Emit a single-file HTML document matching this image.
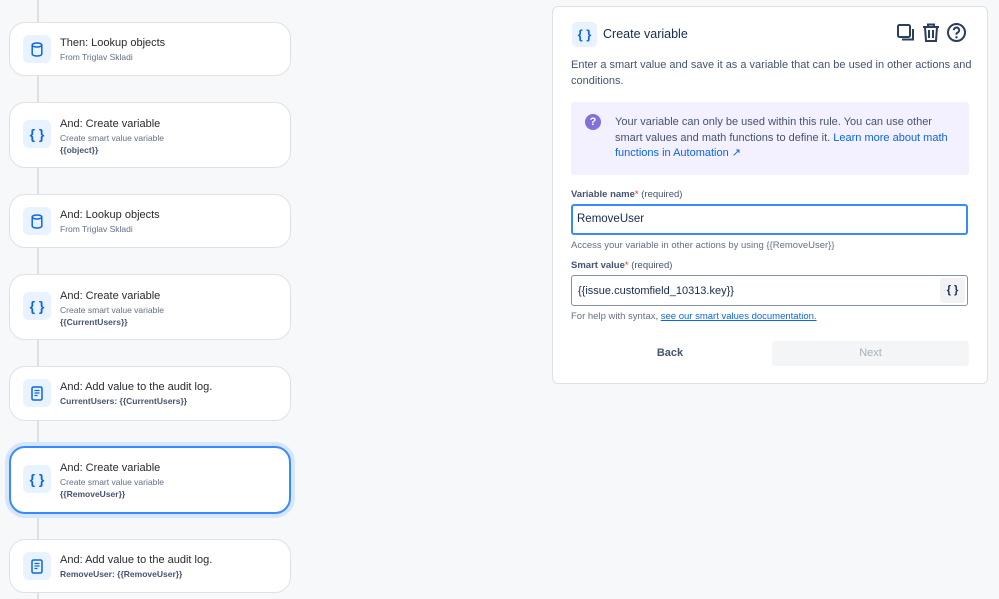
<!DOCTYPE html>
<html><head><meta charset="utf-8"><style>
*{box-sizing:border-box;margin:0;padding:0}
body{width:999px;height:599px;background:#f7f8f9;font-family:"Liberation Sans",sans-serif;color:#172b4d;position:relative;overflow:hidden}
.line{position:absolute;left:37px;top:0;width:2px;height:599px;background:#dcdfe4}
.card{position:absolute;left:9px;width:282px;background:#fff;border:1px solid #dfe1e6;border-radius:16px}
.card.sel{border:2px solid #388bff;box-shadow:0 0 0 4px #d6e6ff}
.ic{position:absolute;left:13px;width:28px;height:28px;border-radius:6px;background:#e9f2ff;color:#0c66e4;display:flex;align-items:center;justify-content:center;font-weight:bold;font-size:14px}
.t{position:absolute;left:50px;font-size:11px;color:#292a2e}
.s{position:absolute;left:50px;font-size:8.5px;color:#626f86}
.b{position:absolute;left:50px;font-size:8.5px;color:#44546f;font-weight:bold}
.panel{position:absolute;left:552px;top:6px;width:436px;height:378px;background:#fff;border:1px solid #dfe1e6;border-radius:6px}
</style></head><body>
<div class="line"></div>

<div class="card" style="top:22px;height:54px"><div class="ic" style="top:12px"><svg width="12" height="15" viewBox="0 0 12 15"><ellipse cx="6" cy="3" rx="4.8" ry="2" fill="none" stroke="#0c66e4" stroke-width="1.5"/><path d="M1.2 3v9c0 1.1 2.1 2 4.8 2s4.8-.9 4.8-2V3" fill="none" stroke="#0c66e4" stroke-width="1.5"/></svg></div><div class="t" style="top:14px">Then: Lookup objects</div><div class="s" style="top:29px">From Triglav Skladi</div></div>

<div class="card" style="top:102px;height:66px"><div class="ic" style="top:17px">{ }</div><div class="t" style="top:15px">And: Create variable</div><div class="s" style="top:30px">Create smart value variable</div><div class="b" style="top:42px">{{object}}</div></div>

<div class="card" style="top:194px;height:54px"><div class="ic" style="top:12px"><svg width="12" height="15" viewBox="0 0 12 15"><ellipse cx="6" cy="3" rx="4.8" ry="2" fill="none" stroke="#0c66e4" stroke-width="1.5"/><path d="M1.2 3v9c0 1.1 2.1 2 4.8 2s4.8-.9 4.8-2V3" fill="none" stroke="#0c66e4" stroke-width="1.5"/></svg></div><div class="t" style="top:14px">And: Lookup objects</div><div class="s" style="top:29px">From Triglav Skladi</div></div>

<div class="card" style="top:274px;height:66px"><div class="ic" style="top:17px">{ }</div><div class="t" style="top:15px">And: Create variable</div><div class="s" style="top:30px">Create smart value variable</div><div class="b" style="top:42px">{{CurrentUsers}}</div></div>

<div class="card" style="top:366px;height:55px"><div class="ic" style="top:12px"><svg width="12" height="15" viewBox="0 0 12 15"><rect x="1" y="1" width="10" height="13" rx="1.5" fill="none" stroke="#0c66e4" stroke-width="1.5"/><path d="M3.5 4.5h5M3.5 7h5M3.5 9.5h3" stroke="#0c66e4" stroke-width="1.3"/></svg></div><div class="t" style="top:14px">And: Add value to the audit log.</div><div class="b" style="top:29px">CurrentUsers: {{CurrentUsers}}</div></div>

<div class="card sel" style="top:446px;height:68px"><div class="ic" style="top:17px;left:12px">{ }</div><div class="t" style="top:14px;left:49px">And: Create variable</div><div class="s" style="top:29px;left:49px">Create smart value variable</div><div class="b" style="top:41px;left:49px">{{RemoveUser}}</div></div>

<div class="card" style="top:539px;height:54px"><div class="ic" style="top:12px"><svg width="12" height="15" viewBox="0 0 12 15"><rect x="1" y="1" width="10" height="13" rx="1.5" fill="none" stroke="#0c66e4" stroke-width="1.5"/><path d="M3.5 4.5h5M3.5 7h5M3.5 9.5h3" stroke="#0c66e4" stroke-width="1.3"/></svg></div><div class="t" style="top:14px">And: Add value to the audit log.</div><div class="b" style="top:29px">RemoveUser: {{RemoveUser}}</div></div>

<div class="panel">
 <div style="position:absolute;left:19px;top:15px;width:25px;height:25px;border-radius:5px;background:#e9f2ff;color:#0c66e4;font-weight:bold;font-size:13px;display:flex;align-items:center;justify-content:center">{ }</div>
 <div style="position:absolute;left:50px;top:20px;font-size:12.5px;color:#172b4d">Create variable</div>
 <svg style="position:absolute;left:343px;top:16px" width="20" height="20" viewBox="0 0 20 20"><rect x="2" y="2" width="12" height="12" rx="1.5" fill="none" stroke="#2c3e5d" stroke-width="2"/><path d="M17 6v10.5H6" fill="none" stroke="#2c3e5d" stroke-width="2"/></svg>
 <svg style="position:absolute;left:368px;top:15px" width="20" height="21" viewBox="0 0 20 21"><path d="M2 5h16M7 5V2.5h6V5M4 5l1 14h10l1-14M8 8v8M12 8v8" fill="none" stroke="#2c3e5d" stroke-width="2"/></svg>
 <svg style="position:absolute;left:393px;top:15px" width="21" height="21" viewBox="0 0 21 21"><circle cx="10.5" cy="10.5" r="8.5" fill="none" stroke="#2c3e5d" stroke-width="2"/><path d="M7.8 8.2a2.7 2.7 0 1 1 3.6 2.5c-.6.3-.9.8-.9 1.5v.6" fill="none" stroke="#2c3e5d" stroke-width="2"/><circle cx="10.5" cy="15.3" r="1.2" fill="#2c3e5d"/></svg>
 <div style="position:absolute;left:18px;top:51px;width:405px;font-size:11px;line-height:15.5px;color:#44546f">Enter a smart value and save it as a variable that can be used in other actions and conditions.</div>
 <div style="position:absolute;left:18px;top:95px;width:398px;height:73px;background:#f3f0ff;border-radius:3px">
  <div style="position:absolute;left:14px;top:12px;width:16px;height:16px;border-radius:50%;background:#8270db;color:#fff;font-size:11px;font-weight:bold;text-align:center;line-height:16px">?</div>
  <div style="position:absolute;left:44px;top:13px;width:345px;font-size:11px;line-height:15.5px;color:#44546f">Your variable can only be used within this rule. You can use other smart values and math functions to define it. <span style="color:#0c66e4">Learn more about math functions in Automation ↗</span></div>
 </div>
 <div style="position:absolute;left:18px;top:182px;font-size:9.5px;color:#44546f"><b>Variable name</b><span style="color:#c9372c">*</span> (required)</div>
 <div style="position:absolute;left:18px;top:197px;width:397px;height:31px;border:2px solid #388bff;border-radius:3px;font-size:11.5px;padding:7px 4px;color:#172b4d">RemoveUser</div>
 <div style="position:absolute;left:18px;top:233px;font-size:9.5px;color:#626f86">Access your variable in other actions by using {{RemoveUser}}</div>
 <div style="position:absolute;left:18px;top:253px;font-size:9.5px;color:#44546f"><b>Smart value</b><span style="color:#c9372c">*</span> (required)</div>
 <div style="position:absolute;left:18px;top:268px;width:397px;height:31px;border:1px solid #8590a2;border-radius:3px;font-size:11px;padding:9px 6px;color:#172b4d">{{issue.customfield_10313.key}}<div style="position:absolute;right:2px;top:2px;width:25px;height:25px;background:#f1f2f4;border-radius:3px;font-weight:bold;font-size:11px;text-align:center;line-height:25px">{ }</div></div>
 <div style="position:absolute;left:18px;top:304px;font-size:9.5px;color:#626f86">For help with syntax, <span style="color:#0c66e4;text-decoration:underline">see our smart values documentation.</span></div>
 <div style="position:absolute;left:18px;top:334px;width:198px;height:25px;font-size:11px;font-weight:bold;color:#44546f;text-align:center;line-height:25px">Back</div>
 <div style="position:absolute;left:219px;top:334px;width:197px;height:25px;background:#f4f5f7;border-radius:3px;font-size:11px;color:#a5adba;text-align:center;line-height:25px">Next</div>
</div>
</body></html>
